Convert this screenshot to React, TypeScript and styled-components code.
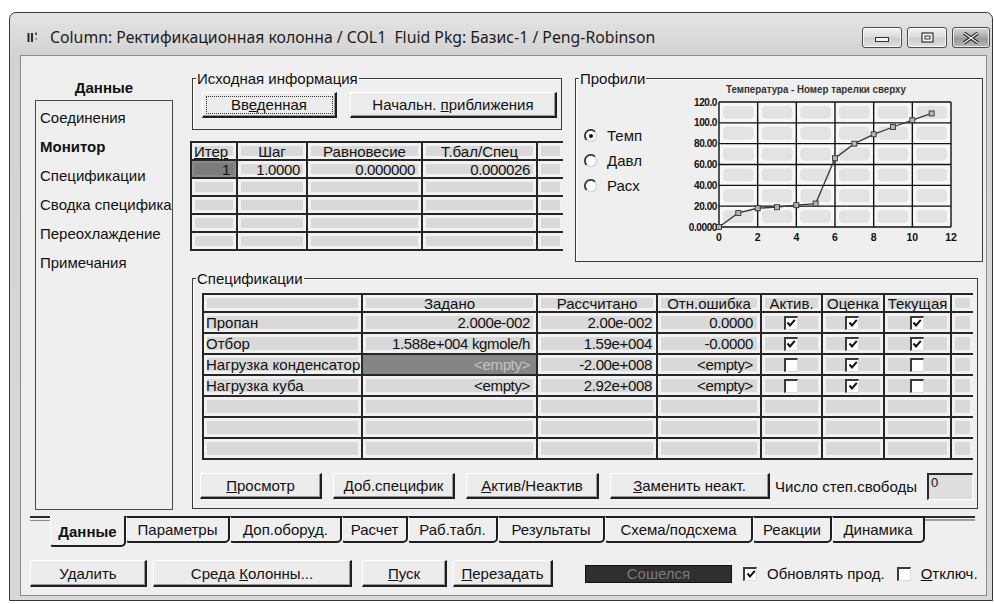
import React from "react";
import styled, { createGlobalStyle, css } from "styled-components";

const UI = `"Liberation Sans", Arial, sans-serif`;

const Global = createGlobalStyle`
  * { box-sizing: border-box; }
  html, body { margin: 0; padding: 0; background: #ffffff; }
  body { font-family: ${UI}; color: #111; }
`;

/* ---------- window frame ---------- */

const Window = styled.div`
  margin: 12px 0 0 9px;
  width: 984px;
  height: 589px;
  border: 1px solid #3a3a3a;
  border-radius: 7px 7px 0 0;
  background: linear-gradient(#e4e4e4, #d3d3d3 42px, #d9d9d9);
  display: flex;
  flex-direction: column;
`;

const TitleBar = styled.div`
  height: 42px;
  flex: none;
  display: flex;
  align-items: center;
  padding: 6px 2px 0 17px;
`;

const AppIcon = styled.svg`
  width: 11px;
  height: 11px;
  flex: none;
`;

const Caption = styled.div`
  margin-left: 12px;
  font: 15.8px "Noto Sans", "Open Sans", sans-serif;
  color: #1c1c1c;
  white-space: pre;
`;

const CaptionButtons = styled.div`
  margin-left: auto;
  align-self: flex-start;
  margin-top: 8px;
  display: flex;
  gap: 5px;
`;

const CaptionButton = styled.div<{ $w: number; $close?: boolean }>`
  width: ${(p) => p.$w}px;
  height: 21px;
  border: 1px solid #4d4d4d;
  border-radius: 3px;
  display: flex;
  align-items: center;
  justify-content: center;
  background: ${(p) =>
    p.$close
      ? "linear-gradient(#d6d6d6, #a9a9a9 50%, #969696 51%, #b8b8b8)"
      : "linear-gradient(#f4f4f4, #d9d9d9 50%, #cbcbcb 51%, #e0e0e0)"};
  box-shadow: inset 0 0 0 1px rgba(255, 255, 255, 0.7);
`;

const Client = styled.div`
  flex: 1;
  margin: 0 5px 4px 10px;
  border: 1px solid #8a8a8a;
  background: #efefef;
  display: flex;
  flex-direction: column;
  font-size: 15px;
`;

/* ---------- page of the tab control ---------- */

const Page = styled.div`
  height: 460px;
  flex: none;
  display: flex;
  gap: 14px;
  padding: 14px 0 0 14px;
`;

const LeftNav = styled.div`
  width: 138px;
  display: flex;
  flex-direction: column;
`;

const NavHeader = styled.div`
  height: 30px;
  display: flex;
  align-items: flex-end;
  justify-content: center;
  padding-bottom: 4px;
  font-weight: bold;
  line-height: 17px;
`;

const NavBox = styled.div`
  height: 410px;
  border: 1px solid #4a4a4a;
  padding-top: 2px;
  display: flex;
  flex-direction: column;
`;

const NavItem = styled.div<{ $active?: boolean }>`
  height: 29px;
  line-height: 29px;
  padding-left: 4px;
  white-space: nowrap;
  font-weight: ${(p) => (p.$active ? "bold" : "normal")};
`;

const Main = styled.div`
  width: 798px;
  display: flex;
  flex-direction: column;
`;

const TopRow = styled.div`
  height: 192px;
  display: flex;
`;

const LeftCol = styled.div`
  width: 378px;
  display: flex;
  flex-direction: column;
`;

const Group = styled.fieldset<{ $w: number; $h: number }>`
  width: ${(p) => p.$w}px;
  height: ${(p) => p.$h}px;
  margin: 0;
  padding: 0;
  border: 1px solid #3a3a3a;
  box-shadow: inset 1px 1px 0 #ffffff;
  min-width: 0;
`;

const Legend = styled.legend`
  margin-left: 3px;
  padding: 0 1px;
  font-size: 15px;
  line-height: 17px;
`;

const InfoGroup = styled(Group)`
  margin-left: 5px;
`;

const InfoRow = styled.div`
  display: flex;
  gap: 13px;
  padding: 5px 0 0 9px;
`;

const Btn = styled.button<{ $w: number; $h?: number; $focus?: boolean }>`
  width: ${(p) => p.$w}px;
  height: ${(p) => p.$h ?? 26}px;
  flex: none;
  padding: 0;
  font: 15px ${UI};
  color: #111;
  background: #ececec;
  border-style: solid;
  border-width: 1px 2px 2px 1px;
  border-color: #ffffff #1e1e1e #1e1e1e #ffffff;
  box-shadow: inset -1px -1px 0 #9a9a9a;
  ${(p) =>
    p.$focus &&
    css`
      outline: 1px dotted #333;
      outline-offset: -5px;
    `}
`;

const ProfileGroup = styled(Group)`
  margin-left: 10px;
`;

const ProfileBody = styled.div`
  display: flex;
`;

const RadioCol = styled.div`
  width: 78px;
  margin-top: 36px;
  padding-left: 8px;
  display: flex;
  flex-direction: column;
`;

const RadioRow = styled.div`
  height: 25px;
  display: flex;
  align-items: center;
  gap: 9px;
`;

const RadioGlyph = styled.svg`
  width: 14px;
  height: 14px;
  flex: none;
`;

const ChartSvg = styled.svg`
  margin-top: -5px;
  flex: none;
`;

const SpecGroup = styled(Group)`
  margin: 8px 0 0 5px;
`;

const SpecBody = styled.div`
  padding: 6px 0 0 9px;
  display: flex;
  flex-direction: column;
`;

const SpecButtons = styled.div`
  margin: 12px 0 0 -2px;
  display: flex;
  align-items: center;
  gap: 11px;
  height: 28px;
`;

const DofLabel = styled.span`
  margin-left: -6px;
  white-space: nowrap;
`;

const DofField = styled.div`
  width: 46px;
  height: 27px;
  margin-left: -1px;
  background: #dedede;
  border-style: solid;
  border-width: 2px 1px 1px 2px;
  border-color: #2a2a2a #ffffff #ffffff #2a2a2a;
  font-size: 13px;
  line-height: 13px;
  padding: 1px 0 0 2px;
`;

/* ---------- grids ---------- */

const Grid = styled.div<{ $cols: string; $w: number }>`
  display: grid;
  width: ${(p) => p.$w}px;
  grid-template-columns: ${(p) => p.$cols};
  border-left: 2px solid #262626;
  border-top: 2px solid #262626;
`;

const IterGrid = styled(Grid)`
  margin: 11px 0 0 3px;
`;

type Tone = "pill" | "dark" | "sel";

const Cell = styled.div<{
  $align?: "left" | "right" | "center";
  $pr?: number;
  $tone?: Tone;
  $last?: boolean;
  $h: number;
}>`
  height: ${(p) => p.$h}px;
  display: flex;
  align-items: center;
  justify-content: ${(p) =>
    p.$align === "right" ? "flex-end" : p.$align === "center" ? "center" : "flex-start"};
  padding: 0 ${(p) => p.$pr ?? 4}px 0 2px;
  border-right: ${(p) => (p.$last ? "none" : "2px solid #262626")};
  border-bottom: 2px solid #262626;
  white-space: nowrap;
  overflow: hidden;
  font-size: 15px;
  ${(p) =>
    p.$tone === "dark"
      ? css`
          background: #7c7c7c;
          box-shadow: inset 0 0 0 2px #8a8a8a;
        `
      : p.$tone === "sel"
      ? css`
          background: #858585;
          color: #c4c4c4;
        `
      : css`
          background: #d9d9d9;
          box-shadow: inset 0 0 0 3px #f1f1f1;
        `}
`;

const Num = styled.span`
  letter-spacing: -0.35px;
`;

const Check = styled.span`
  width: 14px;
  height: 14px;
  flex: none;
  background: #ffffff;
  border-style: solid;
  border-width: 2px 1px 1px 2px;
  border-color: #3a3a3a #dcdcdc #dcdcdc #3a3a3a;
  display: flex;
  align-items: center;
  justify-content: center;
`;

/* ---------- tabs ---------- */

const TabStrip = styled.div`
  height: 32px;
  flex: none;
  display: flex;
  align-items: flex-start;
  padding-left: 9px;
`;

const TabLead = styled.div`
  width: 20px;
  height: 5px;
  border-top: 2px solid #2a2a2a;
  border-bottom: 1px solid #8a8a8a;
`;

const Tab = styled.div<{ $w: number; $active?: boolean }>`
  width: ${(p) => p.$w}px;
  height: ${(p) => (p.$active ? 31 : 27)}px;
  display: flex;
  align-items: center;
  justify-content: center;
  white-space: nowrap;
  border-style: solid;
  border-color: #1e1e1e;
  border-width: ${(p) => (p.$active ? "0 2px 2px 1px" : "2px 2px 2px 1px")};
  border-left-color: #ffffff;
  border-radius: 0 0 5px 3px;
  font-weight: ${(p) => (p.$active ? "bold" : "normal")};
  padding-top: ${(p) => (p.$active ? 1 : 0)}px;
`;

const TabTail = styled.div`
  width: 50px;
  height: 5px;
  border-top: 2px solid #2a2a2a;
  border-bottom: 2px solid #a0a0a0;
`;

/* ---------- bottom bar ---------- */

const BottomBar = styled.div`
  display: flex;
  align-items: center;
  padding: 12px 0 0 9px;
`;

const Status = styled.div`
  width: 147px;
  height: 18px;
  margin-left: 32px;
  background: #2f2f2f;
  border: 1px solid #111;
  color: #7a7a7a;
  font-size: 15px;
  line-height: 16px;
  text-align: center;
`;

const CheckLabel = styled.label<{ $ml: number }>`
  margin-left: ${(p) => p.$ml}px;
  display: flex;
  align-items: center;
  gap: 10px;
  white-space: nowrap;
`;

/* ---------- pieces ---------- */

const Tick = () => (
  <svg width="10" height="10" viewBox="0 0 10 10">
    <polyline points="1.5,4.5 4,7.5 8.8,1.8" fill="none" stroke="#111" strokeWidth="2" />
  </svg>
);

const Box = ({ on }: { on?: boolean }) => <Check>{on && <Tick />}</Check>;

const Radio = ({ on }: { on?: boolean }) => (
  <RadioGlyph viewBox="0 0 14 14">
    <circle cx="7" cy="7" r="5.6" fill="#fbfbfb" stroke="#d6d6d6" strokeWidth="1.4" />
    <path d="M2.6 10.9 A5.6 5.6 0 0 1 10.9 2.6" fill="none" stroke="#3a3a3a" strokeWidth="1.8" />
    {on && <circle cx="7" cy="7" r="2" fill="#111" />}
  </RadioGlyph>
);

const temps: [number, number][] = [
  [0, 0], [1, 13.5], [2, 18], [3, 19], [4, 21], [5, 22.5],
  [6, 66], [7, 80], [8, 89], [9, 96], [10, 102.5], [11, 109],
];

function TempChart() {
  const L = 65, T = 20, W = 232, H = 125;
  const px = (x: number) => L + (x / 12) * W;
  const py = (y: number) => T + H - (y / 120) * H;
  const xs = [0, 2, 4, 6, 8, 10, 12];
  const ys = [0, 20, 40, 60, 80, 100, 120];
  const yLab = ["0.0000", "20.00", "40.00", "60.00", "80.00", "100.0", "120.0"];
  const cellW = W / 6, cellH = H / 6;
  return (
    <ChartSvg width="315" height="163" viewBox="0 0 315 163">
      <text x="162" y="11" textAnchor="middle" fontSize="10" fontWeight="bold"
        fontFamily={UI} fill="#333" textLength="180" lengthAdjust="spacingAndGlyphs">
        Температура - Номер тарелки сверху
      </text>
      <rect x={L} y={T} width={W} height={H} fill="#f7f7f7" />
      {Array.from({ length: 36 }).map((_, i) => {
        const c = i % 6, r = Math.floor(i / 6);
        return (
          <rect key={i} x={L + c * cellW + 4} y={T + r * cellH + 4}
            width={cellW - 8} height={cellH - 8} rx="4" fill="#e3e3e3" />
        );
      })}
      {xs.map((x) => (
        <line key={"v" + x} x1={px(x)} y1={T} x2={px(x)} y2={T + H} stroke="#111" strokeWidth="1.4" />
      ))}
      {ys.map((y) => (
        <line key={"h" + y} x1={L} y1={py(y)} x2={L + W} y2={py(y)} stroke="#111" strokeWidth="1.4" />
      ))}
      {ys.map((y, i) => (
        <text key={"yl" + y} x={L - 2} y={py(y) + 3.5} textAnchor="end" fontSize="10"
          fontWeight="bold" fontFamily={UI} fill="#111" letterSpacing="-0.4">
          {yLab[i]}
        </text>
      ))}
      {xs.map((x) => (
        <text key={"xl" + x} x={px(x)} y={T + H + 14} textAnchor="middle" fontSize="10.5"
          fontWeight="bold" fontFamily={UI} fill="#111">
          {x}
        </text>
      ))}
      <polyline points={temps.map(([x, y]) => `${px(x)},${py(y)}`).join(" ")}
        fill="none" stroke="#3a3a3a" strokeWidth="1.3" />
      {temps.map(([x, y]) => (
        <rect key={"m" + x} x={px(x) - 2.5} y={py(y) - 2.5} width="5" height="5"
          fill="#b4b4b4" stroke="#333" strokeWidth="0.9" />
      ))}
    </ChartSvg>
  );
}

const iterCols = [46, 70, 115, 115, 25];
const iterHead = [
  { t: <u>Итер</u>, a: "left" as const },
  { t: "Шаг", a: "center" as const },
  { t: "Равновесие", a: "center" as const },
  { t: "Т.бал/Спец", a: "center" as const },
  { t: "", a: "center" as const },
];
const iterFirst = ["1", "1.0000", "0.000000", "0.000026", ""];

const specCols = [159, 175, 120, 104, 61, 62, 67, 21];
const specHead = ["", "Задано", "Рассчитано", "Отн.ошибка", "Актив.", "Оценка", "Текущая", ""];

type SpecRow = {
  name: string; set: string; setSel?: boolean; calc: string; err: string;
  act: boolean; est: boolean; cur: boolean;
};
const specRows: SpecRow[] = [
  { name: "Пропан", set: "2.000e-002", calc: "2.00e-002", err: "0.0000", act: true, est: true, cur: true },
  { name: "Отбор", set: "1.588e+004 kgmole/h", calc: "1.59e+004", err: "-0.0000", act: true, est: true, cur: true },
  { name: "Нагрузка конденсатор", set: "<empty>", setSel: true, calc: "-2.00e+008", err: "<empty>", act: false, est: true, cur: false },
  { name: "Нагрузка куба", set: "<empty>", calc: "2.92e+008", err: "<empty>", act: false, est: true, cur: false },
];

const tabs: { label: React.ReactNode; w: number; active?: boolean }[] = [
  { label: "Данные", w: 76, active: true },
  { label: "Параметры", w: 104 },
  { label: <>Доп.обор<u>у</u>д.</>, w: 112 },
  { label: "Расчет", w: 66 },
  { label: "Раб.табл.", w: 90 },
  { label: "Результаты", w: 107 },
  { label: "Схема/подсхема", w: 148 },
  { label: "Реакции", w: 79 },
  { label: "Динамика", w: 93 },
];

export default function App() {
  const specCells: React.ReactNode[] = [];
  specHead.forEach((h, i) =>
    specCells.push(
      <Cell key={"sh" + i} $h={18} $align="center" $pr={2} $last={i === specCols.length - 1}>
        {h}
      </Cell>
    )
  );
  for (let r = 0; r < 7; r++) {
    const row = specRows[r];
    const last = specCols.length - 1;
    const cells: { c: React.ReactNode; a?: "left" | "right" | "center"; pr?: number; tone?: Tone }[] = row
      ? [
          { c: row.name, a: "left", pr: 0 },
          { c: <Num>{row.set}</Num>, a: "right", pr: 6, tone: row.setSel ? "sel" : "pill" },
          { c: <Num>{row.calc}</Num>, a: "right", pr: 4 },
          { c: <Num>{row.err}</Num>, a: "right", pr: 7 },
          { c: <Box on={row.act} />, a: "center" },
          { c: <Box on={row.est} />, a: "center" },
          { c: <Box on={row.cur} />, a: "center" },
          { c: "" },
        ]
      : specCols.map(() => ({ c: "" }));
    cells.forEach((cell, i) =>
      specCells.push(
        <Cell key={`s${r}-${i}`} $h={21} $align={cell.a} $pr={cell.pr} $tone={cell.tone} $last={i === last}>
          {cell.c}
        </Cell>
      )
    );
  }

  const iterCells: React.ReactNode[] = [];
  iterHead.forEach((h, i) =>
    iterCells.push(
      <Cell key={"ih" + i} $h={18} $align={h.a} $pr={2} $last={i === iterCols.length - 1}>
        {h.t}
      </Cell>
    )
  );
  for (let r = 0; r < 5; r++) {
    iterCols.forEach((_, i) =>
      iterCells.push(
        <Cell key={`i${r}-${i}`} $h={18} $align="right" $pr={6}
          $tone={r === 0 && i === 0 ? "dark" : "pill"} $last={i === iterCols.length - 1}>
          {r === 0 ? <Num>{iterFirst[i]}</Num> : ""}
        </Cell>
      )
    );
  }

  return (
    <>
      <Global />
      <Window>
        <TitleBar>
          <AppIcon viewBox="0 0 11 11">
            <rect x="0.5" y="1" width="2" height="9" fill="#2a2a2a" />
            <rect x="4" y="1" width="2" height="9" fill="#2a2a2a" />
            <rect x="8" y="0.5" width="2" height="2.5" fill="#555" />
            <rect x="8.5" y="6" width="1.6" height="1.6" fill="#777" />
          </AppIcon>
          <Caption>Column: Ректификационная колонна / COL1  Fluid Pkg: Базис-1 / Peng-Robinson</Caption>
          <CaptionButtons>
            <CaptionButton $w={40}>
              <svg width="16" height="10" viewBox="0 0 16 10">
                <rect x="1.5" y="4.5" width="13" height="4" fill="#f4f4f4" stroke="#333" />
              </svg>
            </CaptionButton>
            <CaptionButton $w={40}>
              <svg width="13" height="11" viewBox="0 0 13 11">
                <rect x="1" y="1" width="11" height="9" fill="#f4f4f4" stroke="#333" strokeWidth="1.2" />
                <rect x="4" y="4" width="5" height="3" fill="none" stroke="#333" />
              </svg>
            </CaptionButton>
            <CaptionButton $w={38} $close>
              <svg width="20" height="12" viewBox="0 0 20 12">
                <path d="M3 1 L17 11 M17 1 L3 11" stroke="#222" strokeWidth="3.4" />
                <path d="M3 1 L17 11 M17 1 L3 11" stroke="#f2f2f2" strokeWidth="1.4" />
              </svg>
            </CaptionButton>
          </CaptionButtons>
        </TitleBar>

        <Client>
          <Page>
            <LeftNav>
              <NavHeader>Данные</NavHeader>
              <NavBox>
                <NavItem>Соединения</NavItem>
                <NavItem $active>Монитор</NavItem>
                <NavItem>Спецификации</NavItem>
                <NavItem>Сводка специфика</NavItem>
                <NavItem>Переохлаждение</NavItem>
                <NavItem>Примечания</NavItem>
              </NavBox>
            </LeftNav>

            <Main>
              <TopRow>
                <LeftCol>
                  <InfoGroup $w={370} $h={60}>
                    <Legend>Исходная информация</Legend>
                    <InfoRow>
                      <Btn $w={135} $focus>
                        Вв<u>е</u>денная
                      </Btn>
                      <Btn $w={207}>
                        Начальн. <u>п</u>риближения
                      </Btn>
                    </InfoRow>
                  </InfoGroup>
                  <IterGrid $w={373} $cols={iterCols.map((w) => w + "px").join(" ")}>{iterCells}</IterGrid>
                </LeftCol>

                <ProfileGroup $w={408} $h={192}>
                  <Legend>Профили</Legend>
                  <ProfileBody>
                    <RadioCol>
                      <RadioRow>
                        <Radio on />
                        Темп
                      </RadioRow>
                      <RadioRow>
                        <Radio />
                        Давл
                      </RadioRow>
                      <RadioRow>
                        <Radio />
                        Расх
                      </RadioRow>
                    </RadioCol>
                    <TempChart />
                  </ProfileBody>
                </ProfileGroup>
              </TopRow>

              <SpecGroup $w={786} $h={239}>
                <Legend>Спецификации</Legend>
                <SpecBody>
                  <Grid $w={771} $cols={specCols.map((w) => w + "px").join(" ")}>
                    {specCells}
                  </Grid>
                  <SpecButtons>
                    <Btn $w={122}>
                      <u>П</u>росмотр
                    </Btn>
                    <Btn $w={122}>Доб.специфик</Btn>
                    <Btn $w={133}>
                      <u>А</u>ктив/Неактив
                    </Btn>
                    <Btn $w={160}>
                      <u>З</u>аменить неакт.
                    </Btn>
                    <DofLabel>Число степ.свободы</DofLabel>
                    <DofField>0</DofField>
                  </SpecButtons>
                </SpecBody>
              </SpecGroup>
            </Main>
          </Page>

          <TabStrip>
            <TabLead />
            {tabs.map((t, i) => (
              <Tab key={i} $w={t.w} $active={t.active}>
                {t.label}
              </Tab>
            ))}
            <TabTail />
          </TabStrip>

          <BottomBar>
            <Btn $w={117} $h={27}>Удалить</Btn>
            <Btn $w={199} $h={27} style={{ marginLeft: 6 }}>
              Среда <u>К</u>олонны...
            </Btn>
            <Btn $w={85} $h={27} style={{ marginLeft: 10 }}>
              <u>П</u>уск
            </Btn>
            <Btn $w={100} $h={27} style={{ marginLeft: 6 }}>
              <u>П</u>ерезадать
            </Btn>
            <Status>Сошелся</Status>
            <CheckLabel $ml={11}>
              <Box on />
              Обновлять прод.
            </CheckLabel>
            <CheckLabel $ml={12}>
              <Box />
              <span>
                <u>О</u>тключ.
              </span>
            </CheckLabel>
          </BottomBar>
        </Client>
      </Window>
    </>
  );
}
